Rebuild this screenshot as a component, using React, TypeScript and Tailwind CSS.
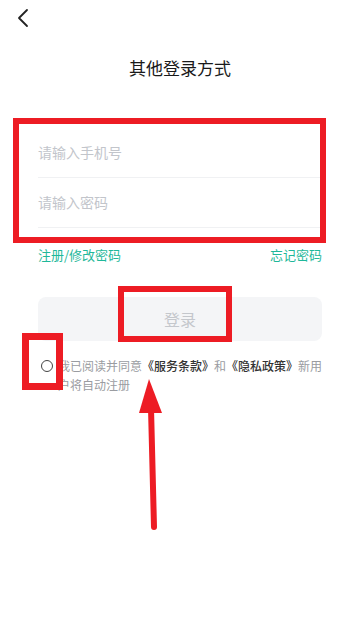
import React from "react";

export default function App() {
  return (
    <div
      className="relative w-[360px] h-[618px] bg-white overflow-hidden"
      style={{ fontFamily: '"Noto Sans CJK SC", "Noto Sans", sans-serif' }}
    >
      {/* header */}
      <div className="h-[36px] flex items-center pl-[16px]">
        <svg width="14" height="20" viewBox="0 0 14 20" fill="none">
          <path d="M11 2 L3 10 L11 18" stroke="#222" strokeWidth="1.8" strokeLinecap="round" strokeLinejoin="round" />
        </svg>
      </div>

      <div className="mt-[20px] text-center text-[17px] leading-[24px] text-[#1a1a1a] font-normal">其他登录方式</div>

      <div className="px-[38px]">
        <div className="mt-[48px]">
          <div className="h-[50px] flex items-center border-b border-[#f0f1f3] text-[14px] text-[#c2c5cb]">请输入手机号</div>
          <div className="h-[50px] flex items-center border-b border-[#f0f1f3] text-[14px] text-[#c2c5cb]">请输入密码</div>
        </div>

        <div className="mt-[18px] flex justify-between text-[13px] leading-[18px] text-[#1fb89a]">
          <span>注册/修改密码</span>
          <span>忘记密码</span>
        </div>

        <div className="mt-[33px] h-[44px] rounded-[8px] bg-[#f4f5f7] flex items-center justify-center text-[16px] text-[#c4c7cc]">
          登录
        </div>

        <div className="mt-[15px] flex items-start pl-[3px]">
          <div className="h-[19px] flex items-center shrink-0">
            <div className="w-[12px] h-[12px] rounded-full border-[1.5px] border-[#444]" />
          </div>
          <p className="ml-[5px] text-[12px] leading-[19px] text-[#9a9ca1] whitespace-nowrap">
            我已阅读并同意<span className="text-[#333] font-medium">《服务条款》</span>和<span className="text-[#333] font-medium">《隐私政策》</span>新用
            <br />
            户将自动注册
          </p>
        </div>
      </div>

      {/* annotations */}
      <div className="absolute left-[13px] top-[118px] w-[313px] h-[125px] border-[6px] border-[#ed1c24]" />
      <div className="absolute left-[118px] top-[286px] w-[114px] h-[56px] border-[6px] border-[#ed1c24]" />
      <div className="absolute left-[22px] top-[333px] w-[41px] h-[57px] border-[7px] border-[#ed1c24]" />
      <svg className="absolute left-0 top-0" width="360" height="618" viewBox="0 0 360 618">
        <polygon points="149,379 139,413 162,413" fill="#ed1c24" />
        <line x1="151" y1="408" x2="154" y2="527" stroke="#ed1c24" strokeWidth="6" strokeLinecap="round" />
      </svg>
    </div>
  );
}
